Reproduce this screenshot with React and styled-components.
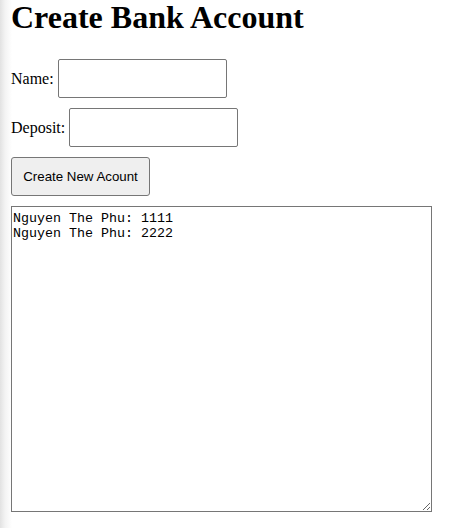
import React from 'react'
import styled, { createGlobalStyle } from 'styled-components'

const GlobalStyle = createGlobalStyle`
  html,
  body {
    margin: 0;
    padding: 0;
    min-height: 528px;
    background: linear-gradient(to right, #e2e2e2 0, #f3f3f3 5px, #fff 12px);
    font-family: 'Liberation Serif', 'Times New Roman', serif;
    color: #000;
  }
`

const Page = styled.div`
  display: flex;
  flex-direction: column;
  align-items: flex-start;
  gap: 10px;
  padding: 0 0 0 11px;
`

const Title = styled.h1`
  margin: 0 0 14px;
  font-size: 32px;
  font-weight: bold;
  line-height: 35px;
`

const Row = styled.label`
  display: flex;
  align-items: center;
  gap: 4px;
  height: 39px;
  font-size: 16px;
  line-height: 18px;
`

const TextInput = styled.input`
  box-sizing: border-box;
  width: 169px;
  height: 39px;
  margin: 0;
  padding: 1px 4px;
  border: 1px solid #767676;
  border-radius: 2px;
  background: #fff;
  font-size: 13px;
`

const Button = styled.button`
  box-sizing: border-box;
  width: 139px;
  height: 39px;
  margin: 0;
  padding: 0 8px;
  border: 1px solid #767676;
  border-radius: 3px;
  background: #efefef;
  color: #000;
  font-family: 'Liberation Sans', Arial, sans-serif;
  font-size: 13.3px;
`

const Log = styled.textarea`
  box-sizing: border-box;
  display: block;
  width: 421px;
  height: 306px;
  margin: 0;
  padding: 4px 2px 2px 1px;
  border: 1px solid #767676;
  border-radius: 0;
  background: #fff;
  color: #000;
  font-family: 'Liberation Mono', 'Courier New', monospace;
  font-size: 13.33px;
  line-height: 15px;
  outline: none;
`

const accounts = [
  { name: 'Nguyen The Phu', deposit: 1111 },
  { name: 'Nguyen The Phu', deposit: 2222 },
]

export default function App() {
  return (
    <>
      <GlobalStyle />
      <Page>
        <Title>Create Bank Account</Title>
        <Row>
          Name: <TextInput type='text' />
        </Row>
        <Row>
          Deposit: <TextInput type='text' />
        </Row>
        <Button type='button'>Create New Acount</Button>
        <Log
          readOnly
          value={accounts.map(a => `${a.name}: ${a.deposit}`).join('\n')}
        />
      </Page>
    </>
  )
}
